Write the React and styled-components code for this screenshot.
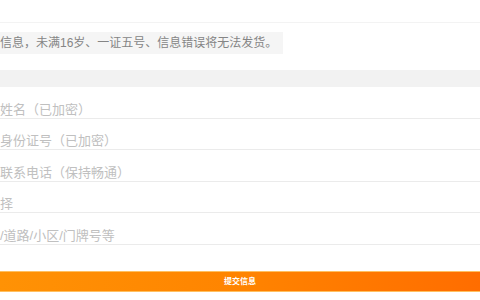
import styled, {createGlobalStyle} from 'styled-components';

const GlobalStyle = createGlobalStyle`
    html, body {
        margin: 0;
        padding: 0;
        background: #fff;
        font-family: 'Liberation Sans', 'Noto Sans CJK SC', sans-serif;
    }
`;

const fields = [
    '姓名（已加密）',
    '身份证号（已加密）',
    '联系电话（保持畅通）',
    '择',
    '/道路/小区/门牌号等',
];

export default function App() {
    return (
        <Page>
            <GlobalStyle />
            <TopBar />
            <NoticeWrap>
                <Notice>信息，未满16岁、一证五号、信息错误将无法发货。</Notice>
            </NoticeWrap>
            <Band />
            <Form>
                {fields.map((text) => (
                    <Row key={text}>
                        <Placeholder>{text}</Placeholder>
                    </Row>
                ))}
            </Form>
            <Footer>
                <Submit type='button'>提交信息</Submit>
            </Footer>
        </Page>
    );
}

const Page = styled.div`
    width: 480px;
    height: 300px;
    overflow: hidden;
    background: #fff;
`;

const TopBar = styled.div`
    height: 22px;
    border-bottom: 1px solid #f3f3f3;
`;

const NoticeWrap = styled.div`
    padding: 9px 0 16px;
`;

const Notice = styled.div`
    display: inline-block;
    height: 22px;
    line-height: 23px;
    padding-right: 6px;
    background: #f5f5f5;
    color: #858585;
    font-size: 12px;
    white-space: nowrap;
`;

const Band = styled.div`
    height: 17px;
    background: #f2f2f2;
`;

const Form = styled.div`
    display: flex;
    flex-direction: column;
`;

const Row = styled.div`
    box-sizing: border-box;
    height: 31.5px;
    display: flex;
    align-items: flex-end;
    border-bottom: 1px solid #ebebeb;
`;

const Placeholder = styled.span`
    font-size: 13px;
    line-height: 14px;
    padding-bottom: 1px;
    color: #c0c0c0;
    white-space: nowrap;
`;

const Footer = styled.div`
    padding-top: 26.5px;
`;

const Submit = styled.button`
    display: block;
    width: 100%;
    height: 21px;
    margin: 0;
    padding: 0;
    border: none;
    background: linear-gradient(90deg, #ff9205 0%, #ff8400 50%, #ff6d00 100%);
    box-shadow: inset 0 1px 0 #ffc060, inset 0 -1px 0 #ffc060;
    color: #fff;
    font-family: 'Liberation Sans', 'Noto Sans CJK SC', sans-serif;
    font-size: 8px;
    font-weight: bold;
    line-height: 21px;
    text-align: center;
`;
